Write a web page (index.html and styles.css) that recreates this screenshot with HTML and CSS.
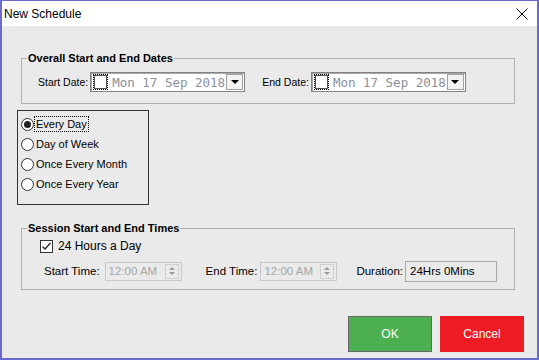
FILE: index.html
```html
<!DOCTYPE html>
<html lang="en">
<head>
    <meta charset="UTF-8">
    <title>New Schedule</title>
    <link rel="stylesheet" href="styles.css">
</head>
<body>
    <div class="window">
        <div class="titlebar">
            <span class="title">New Schedule</span>
            <svg class="close" width="12" height="12" viewBox="0 0 12 12">
                <path d="M0.5 0.5 L11.5 11.5 M11.5 0.5 L0.5 11.5" stroke="#000" stroke-width="1" fill="none"/>
            </svg>
        </div>
        <div class="content">
            <div class="group dates">
                <span class="group-title">Overall Start and End Dates</span>
                <div class="row">
                    <label class="lbl">Start Date:</label>
                    <div class="picker">
                        <span class="focus"><span class="box"></span></span>
                        <span class="date">Mon 17 Sep 2018</span>
                        <span class="drop"><span class="tri"></span></span>
                    </div>
                    <label class="lbl end-lbl">End Date:</label>
                    <div class="picker">
                        <span class="focus"><span class="box"></span></span>
                        <span class="date">Mon 17 Sep 2018</span>
                        <span class="drop"><span class="tri"></span></span>
                    </div>
                </div>
            </div>

            <div class="radios">
                <div class="radio"><span class="dot on"></span><span class="rlabel focused">Every Day</span></div>
                <div class="radio"><span class="dot"></span><span class="rlabel">Day of Week</span></div>
                <div class="radio"><span class="dot"></span><span class="rlabel">Once Every Month</span></div>
                <div class="radio"><span class="dot"></span><span class="rlabel">Once Every Year</span></div>
            </div>

            <div class="group times">
                <span class="group-title">Session Start and End Times</span>
                <div class="check-row">
                    <span class="check">
                        <svg width="11" height="11" viewBox="0 0 11 11"><path d="M1.5 5.5 L4 8 L9.5 2" stroke="#222" stroke-width="1.3" fill="none"/></svg>
                    </span>
                    <span class="clabel">24 Hours a Day</span>
                </div>
                <div class="time-row">
                    <label class="tlbl">Start Time:</label>
                    <div class="spin">
                        <span class="val">12:00 AM</span>
                        <span class="arrows"><span class="up"></span><span class="down"></span></span>
                    </div>
                    <label class="tlbl end-time">End Time:</label>
                    <div class="spin">
                        <span class="val">12:00 AM</span>
                        <span class="arrows"><span class="up"></span><span class="down"></span></span>
                    </div>
                    <label class="tlbl dur-lbl">Duration:</label>
                    <div class="duration">24Hrs 0Mins</div>
                </div>
            </div>

            <div class="buttons">
                <button class="ok">OK</button>
                <button class="cancel">Cancel</button>
            </div>
        </div>
    </div>
</body>
</html>
```

FILE: styles.css
```css
body, html {
    margin: 0;
    padding: 0;
    font-family: 'Liberation Sans', Arial, sans-serif;
    background: #eaeaea;
}
.window {
    width: 539px;
    height: 360px;
    box-sizing: border-box;
    border: 2px solid #6b6bcd;
    border-top-width: 1px;
    background: #eaeaea;
    display: flex;
    flex-direction: column;
}
.titlebar {
    height: 25px;
    background: #fff;
    display: flex;
    align-items: center;
    justify-content: space-between;
    padding: 0 9px 0 2px;
    flex-shrink: 0;
}
.title {
    font-size: 12px;
    color: #000;
}
.content {
    flex: 1;
    display: flex;
    flex-direction: column;
}
.group {
    position: relative;
    border: 1px solid #b0b0b0;
    margin-left: 19px;
    width: 494px;
    box-sizing: border-box;
}
.group-title {
    position: absolute;
    top: -7px;
    left: 5px;
    background: #eaeaea;
    padding: 0 1px;
    font-size: 11px;
    font-weight: bold;
    line-height: 13px;
    color: #000;
}
.dates {
    margin-top: 32px;
    height: 46px;
    padding: 13px 0 0 16px;
}
.row {
    display: flex;
    align-items: center;
    height: 20px;
}
.lbl {
    font-size: 10.5px;
    color: #000;
    margin-right: 2px;
}
.end-lbl {
    margin-left: 17px;
}
.picker {
    width: 155px;
    height: 20px;
    box-sizing: border-box;
    background: #fff;
    border: 1px solid #838383;
    box-shadow: inset 1px 1px 0 #a8a8a8;
    display: flex;
    align-items: center;
    padding-left: 2px;
}
.focus {
    width: 15px;
    height: 16px;
    box-sizing: border-box;
    border: 1px dotted #000;
    display: flex;
    align-items: center;
    justify-content: center;
}
.box {
    width: 11px;
    height: 12px;
    border: 1px solid #555;
    background: #fff;
}
.date {
    font-family: 'DejaVu Sans Mono', monospace;
    font-size: 12.5px;
    color: #8a8fa0;
    margin-left: 4px;
    flex: 1;
    white-space: nowrap;
}
.drop {
    width: 17px;
    height: 16px;
    box-sizing: border-box;
    border: 1px solid #a0a0a0;
    background: #f2f2f2;
    margin-right: 1px;
    display: flex;
    align-items: center;
    justify-content: center;
}
.tri {
    width: 0;
    height: 0;
    border-left: 4px solid transparent;
    border-right: 4px solid transparent;
    border-top: 4px solid #000;
}
.radios {
    margin: 6px 0 0 15px;
    width: 132px;
    height: 95px;
    box-sizing: border-box;
    border: 1px solid #333;
    padding: 3px 0 0 3px;
}
.radio {
    display: flex;
    align-items: center;
    height: 20px;
}
.dot {
    width: 13px;
    height: 13px;
    box-sizing: border-box;
    border: 1px solid #333;
    border-radius: 50%;
    background: #fff;
    display: flex;
    align-items: center;
    justify-content: center;
}
.dot.on::after {
    content: "";
    width: 7px;
    height: 7px;
    border-radius: 50%;
    background: #222;
}
.rlabel {
    font-size: 11px;
    color: #000;
    padding: 0 1px;
    line-height: 14px;
    border: 1px dotted transparent;
}
.rlabel.focused {
    border-color: #000;
}
.times {
    margin-top: 23px;
    height: 62px;
    padding: 10px 0 0 18px;
}
.check-row {
    display: flex;
    align-items: center;
    height: 14px;
}
.check {
    width: 13px;
    height: 13px;
    box-sizing: border-box;
    border: 1px solid #333;
    background: #fff;
    display: flex;
    align-items: center;
    justify-content: center;
}
.clabel {
    font-size: 12px;
    margin-left: 5px;
    color: #000;
}
.time-row {
    display: flex;
    align-items: center;
    margin-top: 8px;
    margin-left: 4px;
    height: 20px;
}
.tlbl {
    font-size: 11.5px;
    color: #000;
    margin-right: 5px;
}
.end-time {
    margin-left: 24px;
    margin-right: 3px;
}
.dur-lbl {
    margin-left: 19px;
    margin-right: 2px;
}
.spin {
    width: 77px;
    height: 19px;
    box-sizing: border-box;
    border: 1px solid #c8c8c8;
    display: flex;
    align-items: center;
    padding-left: 3px;
}
.val {
    font-size: 11.5px;
    color: #a6a6a6;
    flex: 1;
}
.arrows {
    width: 14px;
    height: 15px;
    box-sizing: border-box;
    border: 1px solid #d0d0d0;
    margin-right: 2px;
    display: flex;
    flex-direction: column;
    align-items: center;
    justify-content: space-around;
    padding: 2px 0;
}
.up {
    width: 0;
    height: 0;
    border-left: 3px solid transparent;
    border-right: 3px solid transparent;
    border-bottom: 3px solid #9a9a9a;
}
.down {
    width: 0;
    height: 0;
    border-left: 3px solid transparent;
    border-right: 3px solid transparent;
    border-top: 3px solid #9a9a9a;
}
.duration {
    width: 92px;
    height: 21px;
    box-sizing: border-box;
    border: 1px solid #a8a8a8;
    font-size: 11.5px;
    color: #000;
    padding-left: 4px;
    line-height: 19px;
}
.buttons {
    display: flex;
    justify-content: flex-end;
    gap: 8px;
    margin-top: 26px;
    padding-right: 13px;
}
button {
    width: 84px;
    height: 36px;
    font-family: 'Liberation Sans', Arial, sans-serif;
    font-size: 12px;
    color: #fff;
    cursor: pointer;
}
.ok {
    background: #4caf50;
    border: 1px solid #666;
}
.cancel {
    background: #ed1c24;
    border: none;
}
```
